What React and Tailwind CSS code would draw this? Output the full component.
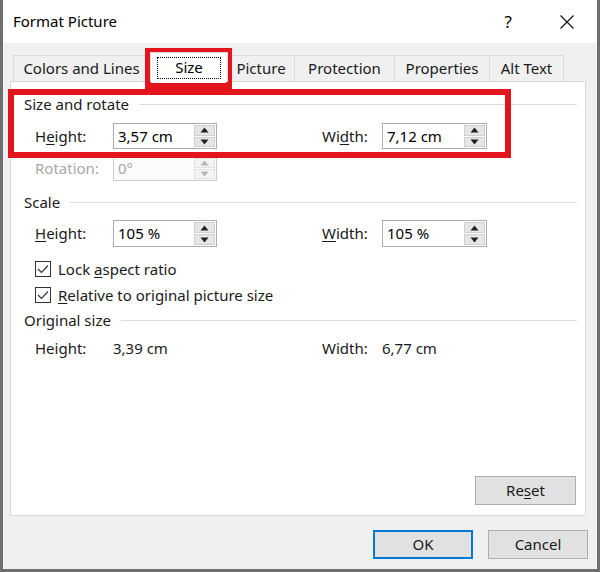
import React from 'react';

const font = { fontFamily: '"Segoe UI", "Noto Sans", "Open Sans", sans-serif' };

const Spinner = ({ disabled }) => (
  <div className="flex flex-col w-[21px] h-full py-px gap-px">
    {['up', 'down'].map((dir) => (
      <div
        key={dir}
        className={`flex-1 flex items-center justify-center border ${disabled ? 'border-[#e0e0e0] bg-[#f4f4f4]' : 'border-[#cfcfcf] bg-[#e6e6e6]'}`}
      >
        <svg width="9" height="6" viewBox="0 0 9 6">
          {dir === 'up' ? (
            <polygon points="4.5,0.5 8.5,5.5 0.5,5.5" fill={disabled ? '#b5b5b5' : '#222'} />
          ) : (
            <polygon points="0.5,0.5 8.5,0.5 4.5,5.5" fill={disabled ? '#b5b5b5' : '#222'} />
          )}
        </svg>
      </div>
    ))}
  </div>
);

const SpinInput = ({ value, width = 'w-[104px]', height = 'h-[26px]', disabled }) => (
  <div
    className={`${width} ${height} flex items-stretch border pr-px ${disabled ? 'border-[#cccccc] bg-[#fbfbfb] text-[#a8a8a8]' : 'border-[#adadad] bg-white text-black'}`}
  >
    <div className="flex-1 flex items-center pl-[4px]">{value}</div>
    <Spinner disabled={disabled} />
  </div>
);

const U = ({ children }) => <span className="underline underline-offset-2">{children}</span>;

const Header = ({ children }) => (
  <div className="flex items-center h-[20px] pl-[13px] pr-[8px]">
    <span className="text-[#1a1a1a]">{children}</span>
    <div className="flex-1 h-px bg-[#dcdcdc] ml-[10px]" />
  </div>
);

const Checkbox = ({ label }) => (
  <div className="flex items-center h-[20px] pl-[24px] gap-[7px]">
    <div className="w-[16px] h-[16px] border border-[#333] bg-white flex items-center justify-center">
      <svg width="12" height="10" viewBox="0 0 12 10">
        <path d="M1 5 L4.5 8.5 L11 1.5" fill="none" stroke="#333" strokeWidth="1.2" />
      </svg>
    </div>
    <span className="text-[#1a1a1a]">{label}</span>
  </div>
);

const Tab = ({ label, w, selected }) =>
  selected ? (
    <div className={`${w} h-[30px] -mb-px relative z-10 bg-white border border-b-0 border-[#d9d9d9] flex items-center justify-center`}>
      <div className="w-[64px] h-[22px] border border-dotted border-black flex items-center justify-center">{label}</div>
    </div>
  ) : (
    <div className={`${w} h-[26px] border border-b-0 border-[#d9d9d9] -ml-px first:ml-0 flex items-center justify-center text-[#1a1a1a]`}>
      {label}
    </div>
  );

const Button = ({ children, primary, w = 'w-[100px]' }) => (
  <div
    className={`${w} h-[29px] flex items-center justify-center bg-[#e1e1e1] text-[#1a1a1a] ${primary ? 'border-2 border-[#0078d7]' : 'border border-[#adadad]'}`}
  >
    {children}
  </div>
);

export default function App() {
  return (
    <div
      style={font}
      className="relative w-[600px] h-[572px] bg-[#f0f0f0] border-l-[3px] border-r-[3px] border-b-[3px] border-[#6e6e6e] text-[15px] leading-none flex flex-col"
    >
      {/* title bar */}
      <div className="h-[43px] bg-white flex items-center pl-[10px] pr-[23px] text-black">
        <span className="flex-1 text-[15px]">Format Picture</span>
        <span className="text-[17px] mr-[48px]">?</span>
        <svg width="14" height="14" viewBox="0 0 14 14">
          <path d="M0.5 0.5 L13.5 13.5 M13.5 0.5 L0.5 13.5" stroke="#111" strokeWidth="1.2" />
        </svg>
      </div>

      {/* tabs */}
      <div className="flex items-end h-[29px] mt-[9px] ml-[10px]">
        <Tab label="Colors and Lines" w="w-[137px]" />
        <Tab label="Size" w="w-[78px]" selected />
        <Tab label="Picture" w="w-[68px]" />
        <Tab label="Protection" w="w-[101px]" />
        <Tab label="Properties" w="w-[96px]" />
        <Tab label="Alt Text" w="w-[75px]" />
      </div>

      {/* panel */}
      <div className="ml-[7px] w-[576px] h-[435px] bg-white border border-[#d9d9d9] flex flex-col pt-[12px]">
        <Header>Size and rotate</Header>
        <div className="flex items-center mt-[9px] pl-[24px]">
          <span className="w-[78px] text-[#1a1a1a]">H<U>e</U>ight:</span>
          <SpinInput value="3,57 cm" />
          <span className="w-[105px]" />
          <span className="w-[60px] text-[#1a1a1a]">Wi<U>d</U>th:</span>
          <SpinInput value="7,12 cm" width="w-[105px]" />
        </div>
        <div className="flex items-center mt-[7px] pl-[24px]">
          <span className="w-[78px] text-[#a8a8a8]">Rotation:</span>
          <SpinInput value="0°" height="h-[25px]" disabled />
        </div>

        <div className="mt-[11px]">
          <Header>Scale</Header>
        </div>
        <div className="flex items-center mt-[8px] pl-[24px]">
          <span className="w-[78px] text-[#1a1a1a]"><U>H</U>eight:</span>
          <SpinInput value="105 %" height="h-[27px]" />
          <span className="w-[105px]" />
          <span className="w-[60px] text-[#1a1a1a]"><U>W</U>idth:</span>
          <SpinInput value="105 %" width="w-[105px]" height="h-[27px]" />
        </div>
        <div className="mt-[12px]">
          <Checkbox label={<>Lock <U>a</U>spect ratio</>} />
        </div>
        <div className="mt-[6px]">
          <Checkbox label={<><U>R</U>elative to original picture size</>} />
        </div>

        <div className="mt-[5px]">
          <Header>Original size</Header>
        </div>
        <div className="flex items-center h-[20px] mt-[8px] pl-[24px] text-[#1a1a1a]">
          <span className="w-[78px]">Height:</span>
          <span className="w-[209px]">3,39 cm</span>
          <span className="w-[60px]">Width:</span>
          <span>6,77 cm</span>
        </div>

        <div className="mt-auto mb-[10px] mr-[9px] flex justify-end">
          <Button w="w-[101px]">Re<U>s</U>et</Button>
        </div>
      </div>

      {/* dialog buttons */}
      <div className="flex justify-end gap-[15px] mt-[14px] mr-[9px]">
        <Button primary>OK</Button>
        <Button>Cancel</Button>
      </div>

      {/* red highlight boxes */}
      <div className="absolute left-[142px] top-[48px] w-[87px] h-[42px] border-[6px] border-b-[7px] border-[#e3141d] pointer-events-none" />
      <div className="absolute left-[5px] top-[89px] w-[503px] h-[69px] border-[6px] border-[#e3141d] pointer-events-none" />
    </div>
  );
}
